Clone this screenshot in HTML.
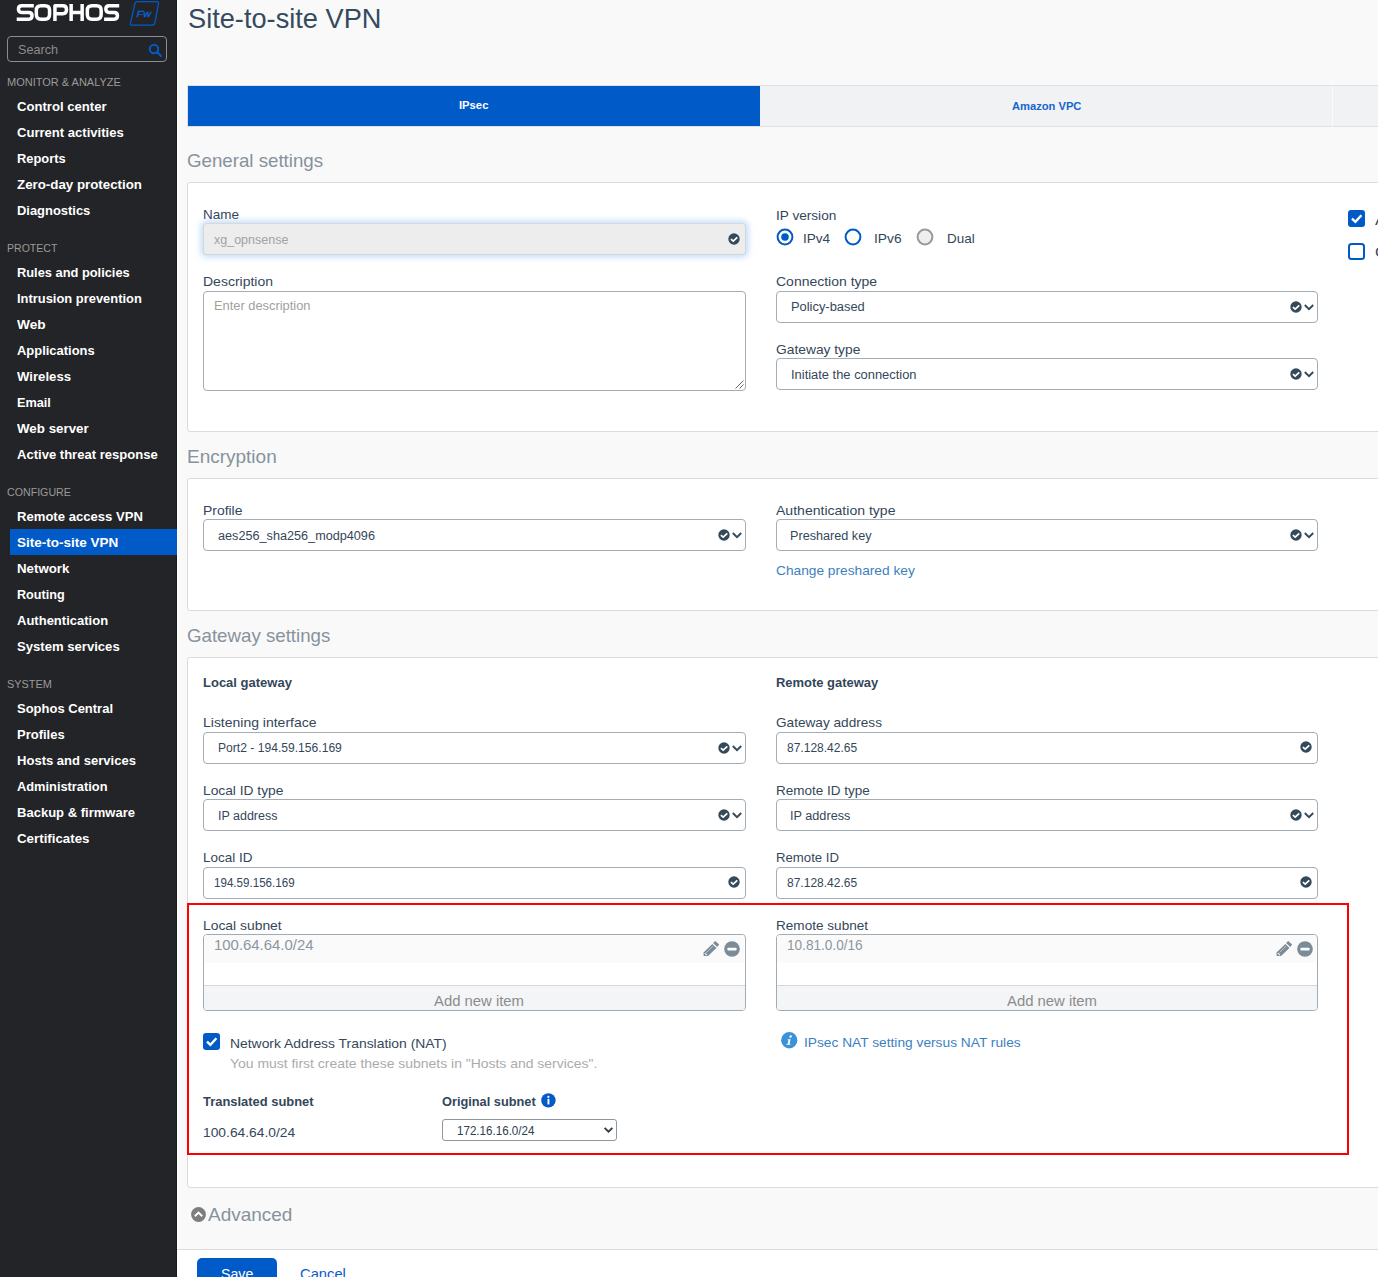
<!DOCTYPE html>
<html>
<head>
<meta charset="utf-8">
<title>Site-to-site VPN</title>
<style>
*{box-sizing:border-box;margin:0;padding:0}
html,body{width:1378px;height:1277px;overflow:hidden;background:#f9f9f9;font-family:"Liberation Sans",sans-serif;color:#34424f}
.abs{position:absolute}
#side{position:absolute;left:0;top:0;width:177px;height:1277px;background:#232427;overflow:hidden}
#main{position:absolute;left:177px;top:0;width:1201px;height:1277px;background:#f9f9f9;overflow:hidden}
.t{position:absolute;white-space:nowrap;transform-origin:0 50%}
.panel{position:absolute;left:10px;width:1300px;background:#fff;border:1px solid #d9dcdf;border-radius:3px}
.bx{position:absolute;border:1px solid #a3adb6;border-radius:4px;background:#fff}
svg{position:absolute;overflow:visible}
.lst{position:absolute;border:1px solid #a1abb4;border-radius:4px;background:#fff;overflow:hidden}
.lst .r1{position:absolute;left:0;top:0;right:1px;height:28px;background:#fafafa}
.lst .r2{position:absolute;left:0;right:0;bottom:0;height:25px;background:#f4f5f7;border-top:1px solid #d7d7db}

</style>
</head>
<body>
<div id="side">
<div class="abs" style="left:176px;top:0;width:1px;height:1277px;background:#18191b"></div>
<svg style="left:0;top:0" width="125" height="26" viewBox="0 0 125 26"><path d="M33.80 5.65 H21.75 Q18.45 5.65 18.45 8.95 V9.10 Q18.45 12.40 21.75 12.40 H28.75 Q32.05 12.40 32.05 15.70 V15.85 Q32.05 19.15 28.75 19.15 H16.70 M40.95 5.65 H44.95 Q49.55 5.65 49.55 10.25 V14.55 Q49.55 19.15 44.95 19.15 H40.95 Q36.35 19.15 36.35 14.55 V10.25 Q36.35 5.65 40.95 5.65 Z M54.95 20.90 V5.65 H62.85 Q66.45 5.65 66.45 9.25 V10.05 Q66.45 13.65 62.85 13.65 H54.95 M71.15 3.90 V20.90 M82.15 3.90 V20.90 M71.15 12.40 H82.15 M91.95 5.65 H96.55 Q101.15 5.65 101.15 10.25 V14.55 Q101.15 19.15 96.55 19.15 H91.95 Q87.35 19.15 87.35 14.55 V10.25 Q87.35 5.65 91.95 5.65 Z M119.20 5.65 H109.15 Q105.85 5.65 105.85 8.95 V9.10 Q105.85 12.40 109.15 12.40 H114.15 Q117.45 12.40 117.45 15.70 V15.85 Q117.45 19.15 114.15 19.15 H104.10" fill="none" stroke="#fff" stroke-width="3.5" stroke-linejoin="round"/></svg>
<svg style="left:129px;top:0" width="32" height="28" viewBox="0 0 32 28"><path d="M8.6 1.6 H28 Q30 1.6 29.5 3.6 L25.9 22.8 Q25.4 25.1 23 25.1 H2.4 Q1 25.1 1.4 23.7 L5.9 3.6 Q6.4 1.6 8.6 1.6 Z" fill="none" stroke="#005bc8" stroke-width="1.3"/><text x="7.6" y="16.9" font-family="Liberation Sans, sans-serif" font-style="italic" font-size="9.8" fill="#0a62d6" stroke="#0a62d6" stroke-width="0.35" textLength="14.4" lengthAdjust="spacingAndGlyphs">Fw</text></svg>
<div class="abs" style="left:7px;top:36px;width:160px;height:26px;border:1px solid #878e95;border-radius:4px;"></div>
<svg style="left:148px;top:43px" width="15" height="15" viewBox="0 0 15 15"><circle cx="6" cy="6" r="4.2" fill="none" stroke="#005bc8" stroke-width="2"/><path d="M9.2 9.2 L13 13" stroke="#005bc8" stroke-width="2.2" stroke-linecap="round"/></svg>
<div class="abs" style="left:10px;top:529px;width:167px;height:26px;background:#005bc8"></div>

<div class="t" style="left:17.91px;top:41.30px;font-size:13px;line-height:17px;color:#8b8b8b;transform:scaleX(0.9703);">Search</div>
<div class="t" style="left:6.96px;top:74.60px;font-size:11.5px;line-height:15px;color:#9c9a97;transform:scaleX(0.9564);">MONITOR &amp; ANALYZE</div>
<div class="t" style="left:16.80px;top:97.70px;font-size:13.4px;line-height:17px;color:#ffffff;font-weight:bold;transform:scaleX(0.9791);">Control center</div>
<div class="t" style="left:16.80px;top:123.70px;font-size:13.4px;line-height:17px;color:#ffffff;font-weight:bold;transform:scaleX(0.9753);">Current activities</div>
<div class="t" style="left:16.80px;top:149.70px;font-size:13.4px;line-height:17px;color:#ffffff;font-weight:bold;transform:scaleX(0.9604);">Reports</div>
<div class="t" style="left:16.80px;top:175.70px;font-size:13.4px;line-height:17px;color:#ffffff;font-weight:bold;transform:scaleX(0.9942);">Zero-day protection</div>
<div class="t" style="left:16.80px;top:201.70px;font-size:13.4px;line-height:17px;color:#ffffff;font-weight:bold;transform:scaleX(0.9657);">Diagnostics</div>
<div class="t" style="left:6.96px;top:240.60px;font-size:11.5px;line-height:15px;color:#9c9a97;transform:scaleX(0.9170);">PROTECT</div>
<div class="t" style="left:16.80px;top:263.70px;font-size:13.4px;line-height:17px;color:#ffffff;font-weight:bold;transform:scaleX(0.9585);">Rules and policies</div>
<div class="t" style="left:16.80px;top:289.70px;font-size:13.4px;line-height:17px;color:#ffffff;font-weight:bold;transform:scaleX(0.9641);">Intrusion prevention</div>
<div class="t" style="left:16.80px;top:315.70px;font-size:13.4px;line-height:17px;color:#ffffff;font-weight:bold;transform:scaleX(1.0204);">Web</div>
<div class="t" style="left:16.80px;top:341.70px;font-size:13.4px;line-height:17px;color:#ffffff;font-weight:bold;transform:scaleX(0.9670);">Applications</div>
<div class="t" style="left:16.80px;top:367.70px;font-size:13.4px;line-height:17px;color:#ffffff;font-weight:bold;transform:scaleX(0.9843);">Wireless</div>
<div class="t" style="left:16.80px;top:393.70px;font-size:13.4px;line-height:17px;color:#ffffff;font-weight:bold;transform:scaleX(0.9488);">Email</div>
<div class="t" style="left:16.80px;top:419.70px;font-size:13.4px;line-height:17px;color:#ffffff;font-weight:bold;transform:scaleX(0.9963);">Web server</div>
<div class="t" style="left:16.80px;top:445.70px;font-size:13.4px;line-height:17px;color:#ffffff;font-weight:bold;transform:scaleX(0.9746);">Active threat response</div>
<div class="t" style="left:6.96px;top:484.60px;font-size:11.5px;line-height:15px;color:#9c9a97;transform:scaleX(0.9259);">CONFIGURE</div>
<div class="t" style="left:16.80px;top:507.70px;font-size:13.4px;line-height:17px;color:#ffffff;font-weight:bold;transform:scaleX(0.9777);">Remote access VPN</div>
<div class="t" style="left:16.80px;top:533.70px;font-size:13.4px;line-height:17px;color:#ffffff;font-weight:bold;transform:scaleX(1.0075);">Site-to-site VPN</div>
<div class="t" style="left:16.80px;top:559.70px;font-size:13.4px;line-height:17px;color:#ffffff;font-weight:bold;transform:scaleX(0.9917);">Network</div>
<div class="t" style="left:16.80px;top:585.70px;font-size:13.4px;line-height:17px;color:#ffffff;font-weight:bold;transform:scaleX(0.9432);">Routing</div>
<div class="t" style="left:16.80px;top:611.70px;font-size:13.4px;line-height:17px;color:#ffffff;font-weight:bold;transform:scaleX(0.9719);">Authentication</div>
<div class="t" style="left:16.80px;top:637.70px;font-size:13.4px;line-height:17px;color:#ffffff;font-weight:bold;transform:scaleX(0.9783);">System services</div>
<div class="t" style="left:6.96px;top:676.60px;font-size:11.5px;line-height:15px;color:#9c9a97;transform:scaleX(0.9449);">SYSTEM</div>
<div class="t" style="left:16.80px;top:699.70px;font-size:13.4px;line-height:17px;color:#ffffff;font-weight:bold;transform:scaleX(0.9702);">Sophos Central</div>
<div class="t" style="left:16.80px;top:725.70px;font-size:13.4px;line-height:17px;color:#ffffff;font-weight:bold;transform:scaleX(0.9711);">Profiles</div>
<div class="t" style="left:16.80px;top:751.70px;font-size:13.4px;line-height:17px;color:#ffffff;font-weight:bold;transform:scaleX(0.9740);">Hosts and services</div>
<div class="t" style="left:16.80px;top:777.70px;font-size:13.4px;line-height:17px;color:#ffffff;font-weight:bold;transform:scaleX(0.9579);">Administration</div>
<div class="t" style="left:16.80px;top:803.70px;font-size:13.4px;line-height:17px;color:#ffffff;font-weight:bold;transform:scaleX(0.9727);">Backup &amp; firmware</div>
<div class="t" style="left:16.80px;top:829.70px;font-size:13.4px;line-height:17px;color:#ffffff;font-weight:bold;transform:scaleX(0.9941);">Certificates</div>
</div>
<div id="main">
<div class="abs" style="left:0;top:0;width:1px;height:1277px;background:#fff"></div>
<!-- tabs -->
<div class="abs" style="left:10px;top:85px;width:1200px;height:42px;background:#f1f2f4;border:1px solid #dfe1e4;"></div>
<div class="abs" style="left:11px;top:86px;width:572px;height:40px;background:#005bc8;"></div>
<div class="abs" style="left:1155px;top:86px;width:1px;height:40px;background:#fafafa;"></div>
<!-- panels -->
<div class="panel" style="top:182px;height:250px"></div>
<div class="panel" style="top:478px;height:133px"></div>
<div class="panel" style="top:657px;height:531px"></div>
<!-- radios -->
<svg style="left:598.5px;top:227.6px" width="18" height="18" viewBox="0 0 18 18"><circle cx="9" cy="9" r="7.4" fill="#fff" stroke="#005bc8" stroke-width="2"/><circle cx="9" cy="9" r="3.8" fill="#005bc8"/></svg>
<svg style="left:666.6px;top:227.6px" width="18" height="18" viewBox="0 0 18 18"><circle cx="9" cy="9" r="7.4" fill="#fcfcfc" stroke="#005bc8" stroke-width="2"/></svg>
<svg style="left:738.6px;top:227.6px" width="18" height="18" viewBox="0 0 18 18"><circle cx="9" cy="9" r="7.4" fill="#eee" stroke="#9a9a9a" stroke-width="2"/></svg>
<!-- right checkboxes -->
<svg style="left:1171px;top:210px" width="17" height="17" viewBox="0 0 17 17"><rect x="0" y="0" width="17" height="17" rx="3" fill="#005bc8"/><path d="M4 8.6 L7.4 11.8 L13.4 5.2" fill="none" stroke="#fff" stroke-width="2.4"/></svg>
<svg style="left:1171px;top:243px" width="17" height="17" viewBox="0 0 17 17"><rect x="1" y="1" width="15" height="15" rx="2.5" fill="#fff" stroke="#005bc8" stroke-width="2"/></svg>
<!-- red box -->
<div class="abs" style="left:10px;top:903px;width:1162px;height:252px;border:2px solid #ff0000"></div>
<!-- NAT checkbox -->
<svg style="left:26px;top:1033px" width="17" height="17" viewBox="0 0 17 17"><rect x="0" y="0" width="17" height="17" rx="3" fill="#005bc8"/><path d="M4 8.6 L7.4 11.8 L13.4 5.2" fill="none" stroke="#fff" stroke-width="2.4"/></svg>
<!-- info icons -->
<svg style="left:364.1px;top:1093.1px" width="14.8" height="14.8" viewBox="0 0 15 15"><circle cx="7.5" cy="7.5" r="7.3" fill="#005bc8"/><circle cx="7.5" cy="4" r="1.1" fill="#fff"/><rect x="6.6" y="6" width="1.9" height="5.6" fill="#fff"/></svg>
<svg style="left:604.1px;top:1031.7px" width="16.5" height="16.5" viewBox="0 0 16 16"><circle cx="8" cy="8" r="7.9" fill="#3a93d8"/><g transform="translate(1.9 0) skewX(-13)"><circle cx="8.4" cy="4.3" r="1.2" fill="#fff"/><path d="M6.3 7 H9 V11.3 H10 V12.4 H6.2 V11.3 H7.2 V8.1 H6.3 Z" fill="#fff"/></g></svg>
<!-- native select -->
<div class="abs" style="left:265px;top:1119px;width:175px;height:22px;border:1px solid #8f969c;border-radius:3px;background:#fff"></div>
<svg style="left:426.6px;top:1127.4px" width="9" height="6" viewBox="0 0 9 6"><path d="M0.6 0.9 L4.5 4.7 L8.4 0.9" fill="none" stroke="#2e3f4d" stroke-width="1.9"/></svg>
<!-- advanced icon -->
<svg style="left:13.9px;top:1207.4px" width="15" height="15" viewBox="0 0 15 15"><circle cx="7.5" cy="7.5" r="7.4" fill="#7d7d7d"/><path d="M3.8 9.3 L7.5 5.6 L11.2 9.3" fill="none" stroke="#fff" stroke-width="2"/></svg>
<!-- bottom bar -->
<div class="abs" style="left:0;top:1249px;width:1201px;height:40px;background:#fff;border-top:1px solid #dcdcdc"></div>
<div class="abs" style="left:20px;top:1258px;width:80px;height:40px;background:#005bc8;border-radius:5px"></div>

<div class="bx" style="left:26.0px;top:223.4px;width:543.0px;height:31.4px;background:#ededed;border-color:#d4d6d8;border-top-color:#d9d9d9;box-shadow:0 0 6px 1.5px rgba(150,195,245,.6);"></div><svg style="left:550.6px;top:233.4px" width="12" height="12" viewBox="0 0 12 12"><circle cx="6" cy="6" r="5.7" fill="#34495a"/><path d="M2.9 6.1 L5.2 8.1 L9.3 4.4" fill="none" stroke="#fff" stroke-width="1.75"/></svg>
<div class="bx" style="left:26.0px;top:291.0px;width:543.0px;height:100.0px;"></div>
<svg style="left:558.0px;top:380.0px" width="9" height="9" viewBox="0 0 9 9"><path d="M0.5 8.5 L8.5 0.5 M4.5 8.5 L8.5 4.5" stroke="#666" stroke-width="1" fill="none"/></svg>
<div class="bx" style="left:599.0px;top:291.0px;width:542.0px;height:32.0px;"></div><svg style="left:1113.3px;top:300.8px" width="12" height="12" viewBox="0 0 12 12"><circle cx="6" cy="6" r="5.7" fill="#34495a"/><path d="M2.9 6.1 L5.2 8.1 L9.3 4.4" fill="none" stroke="#fff" stroke-width="1.75"/></svg><svg style="left:1126.8px;top:303.8px" width="10" height="7" viewBox="0 0 10 7"><path d="M0.8 1 L5 5.2 L9.2 1" fill="none" stroke="#34495a" stroke-width="1.9"/></svg>
<div class="bx" style="left:599.0px;top:358.0px;width:542.0px;height:32.0px;"></div><svg style="left:1113.3px;top:368.3px" width="12" height="12" viewBox="0 0 12 12"><circle cx="6" cy="6" r="5.7" fill="#34495a"/><path d="M2.9 6.1 L5.2 8.1 L9.3 4.4" fill="none" stroke="#fff" stroke-width="1.75"/></svg><svg style="left:1126.8px;top:371.3px" width="10" height="7" viewBox="0 0 10 7"><path d="M0.8 1 L5 5.2 L9.2 1" fill="none" stroke="#34495a" stroke-width="1.9"/></svg>
<div class="bx" style="left:26.0px;top:519.0px;width:543.0px;height:32.0px;"></div><svg style="left:540.9px;top:528.8px" width="12" height="12" viewBox="0 0 12 12"><circle cx="6" cy="6" r="5.7" fill="#34495a"/><path d="M2.9 6.1 L5.2 8.1 L9.3 4.4" fill="none" stroke="#fff" stroke-width="1.75"/></svg><svg style="left:554.8px;top:531.8px" width="10" height="7" viewBox="0 0 10 7"><path d="M0.8 1 L5 5.2 L9.2 1" fill="none" stroke="#34495a" stroke-width="1.9"/></svg>
<div class="bx" style="left:599.0px;top:519.0px;width:542.0px;height:32.0px;"></div><svg style="left:1113.3px;top:528.8px" width="12" height="12" viewBox="0 0 12 12"><circle cx="6" cy="6" r="5.7" fill="#34495a"/><path d="M2.9 6.1 L5.2 8.1 L9.3 4.4" fill="none" stroke="#fff" stroke-width="1.75"/></svg><svg style="left:1126.8px;top:531.8px" width="10" height="7" viewBox="0 0 10 7"><path d="M0.8 1 L5 5.2 L9.2 1" fill="none" stroke="#34495a" stroke-width="1.9"/></svg>
<div class="bx" style="left:26.0px;top:732.0px;width:543.0px;height:32.0px;"></div><svg style="left:540.9px;top:741.8px" width="12" height="12" viewBox="0 0 12 12"><circle cx="6" cy="6" r="5.7" fill="#34495a"/><path d="M2.9 6.1 L5.2 8.1 L9.3 4.4" fill="none" stroke="#fff" stroke-width="1.75"/></svg><svg style="left:554.8px;top:744.8px" width="10" height="7" viewBox="0 0 10 7"><path d="M0.8 1 L5 5.2 L9.2 1" fill="none" stroke="#34495a" stroke-width="1.9"/></svg>
<div class="bx" style="left:599.0px;top:732.0px;width:542.0px;height:32.0px;"></div><svg style="left:1122.6px;top:741.4px" width="12" height="12" viewBox="0 0 12 12"><circle cx="6" cy="6" r="5.7" fill="#34495a"/><path d="M2.9 6.1 L5.2 8.1 L9.3 4.4" fill="none" stroke="#fff" stroke-width="1.75"/></svg>
<div class="bx" style="left:26.0px;top:799.0px;width:543.0px;height:32.0px;"></div><svg style="left:540.9px;top:809.3px" width="12" height="12" viewBox="0 0 12 12"><circle cx="6" cy="6" r="5.7" fill="#34495a"/><path d="M2.9 6.1 L5.2 8.1 L9.3 4.4" fill="none" stroke="#fff" stroke-width="1.75"/></svg><svg style="left:554.8px;top:812.3px" width="10" height="7" viewBox="0 0 10 7"><path d="M0.8 1 L5 5.2 L9.2 1" fill="none" stroke="#34495a" stroke-width="1.9"/></svg>
<div class="bx" style="left:599.0px;top:799.0px;width:542.0px;height:32.0px;"></div><svg style="left:1113.3px;top:809.3px" width="12" height="12" viewBox="0 0 12 12"><circle cx="6" cy="6" r="5.7" fill="#34495a"/><path d="M2.9 6.1 L5.2 8.1 L9.3 4.4" fill="none" stroke="#fff" stroke-width="1.75"/></svg><svg style="left:1126.8px;top:812.3px" width="10" height="7" viewBox="0 0 10 7"><path d="M0.8 1 L5 5.2 L9.2 1" fill="none" stroke="#34495a" stroke-width="1.9"/></svg>
<div class="bx" style="left:26.0px;top:867.0px;width:543.0px;height:32.0px;"></div><svg style="left:550.6px;top:876.4px" width="12" height="12" viewBox="0 0 12 12"><circle cx="6" cy="6" r="5.7" fill="#34495a"/><path d="M2.9 6.1 L5.2 8.1 L9.3 4.4" fill="none" stroke="#fff" stroke-width="1.75"/></svg>
<div class="bx" style="left:599.0px;top:867.0px;width:542.0px;height:32.0px;"></div><svg style="left:1122.6px;top:876.4px" width="12" height="12" viewBox="0 0 12 12"><circle cx="6" cy="6" r="5.7" fill="#34495a"/><path d="M2.9 6.1 L5.2 8.1 L9.3 4.4" fill="none" stroke="#fff" stroke-width="1.75"/></svg>
<div class="lst" style="left:26px;top:934px;width:543px;height:77px"><div class="r1"></div><div class="r2"></div></div><svg style="left:526.0px;top:940.0px" width="17" height="17" viewBox="0 0 17 17"><path d="M12.2 1 L16.2 4.6 L14.2 6.9 L10.1 3 Z M9.4 3.9 L13.5 8 L5 16.1 L0.7 16.1 L0.5 12.4 Z" fill="#7b8b97"/><path d="M3.4 12.6 L10.2 5.9" stroke="#fafafa" stroke-width="0.5" fill="none"/><path d="M1.8 13.2 L3.9 15.2" stroke="#fafafa" stroke-width="1.1" fill="none"/></svg><svg style="left:547.0px;top:940.5px" width="16" height="16" viewBox="0 0 16 16"><circle cx="8" cy="8" r="7.8" fill="#7b8b97"/><rect x="3.4" y="6.7" width="9.2" height="2.8" rx="0.8" fill="#fff"/></svg>
<div class="lst" style="left:599px;top:934px;width:542px;height:77px"><div class="r1"></div><div class="r2"></div></div><svg style="left:1098.7px;top:940.0px" width="17" height="17" viewBox="0 0 17 17"><path d="M12.2 1 L16.2 4.6 L14.2 6.9 L10.1 3 Z M9.4 3.9 L13.5 8 L5 16.1 L0.7 16.1 L0.5 12.4 Z" fill="#7b8b97"/><path d="M3.4 12.6 L10.2 5.9" stroke="#fafafa" stroke-width="0.5" fill="none"/><path d="M1.8 13.2 L3.9 15.2" stroke="#fafafa" stroke-width="1.1" fill="none"/></svg><svg style="left:1119.7px;top:940.5px" width="16" height="16" viewBox="0 0 16 16"><circle cx="8" cy="8" r="7.8" fill="#7b8b97"/><rect x="3.4" y="6.7" width="9.2" height="2.8" rx="0.8" fill="#fff"/></svg>
<div class="t" style="left:10.67px;top:1.40px;font-size:27.6px;line-height:36px;color:#364a5e;transform:scaleX(0.9855);">Site-to-site VPN</div>
<div class="t" style="left:282.25px;top:97.70px;font-size:11.5px;line-height:15px;color:#ffffff;font-weight:bold;transform:scaleX(0.9776);">IPsec</div>
<div class="t" style="left:834.95px;top:99.10px;font-size:11.5px;line-height:15px;color:#1565d0;font-weight:bold;transform:scaleX(0.9694);">Amazon VPC</div>
<div class="t" style="left:10.04px;top:148.50px;font-size:18.5px;line-height:24px;color:#87929c;transform:scaleX(1.0103);">General settings</div>
<div class="t" style="left:10.04px;top:444.50px;font-size:18.5px;line-height:24px;color:#87929c;transform:scaleX(1.0264);">Encryption</div>
<div class="t" style="left:10.04px;top:623.50px;font-size:18.5px;line-height:24px;color:#87929c;transform:scaleX(1.0099);">Gateway settings</div>
<div class="t" style="left:30.64px;top:1202.50px;font-size:18.5px;line-height:24px;color:#87929c;transform:scaleX(1.0257);">Advanced</div>
<div class="t" style="left:26.22px;top:206.00px;font-size:12.8px;line-height:17px;color:#34475a;transform:scaleX(1.0535);">Name</div>
<div class="t" style="left:37.02px;top:230.60px;font-size:12.8px;line-height:17px;color:#a2a2a2;transform:scaleX(0.9767);">xg_opnsense</div>
<div class="t" style="left:26.22px;top:272.80px;font-size:12.8px;line-height:17px;color:#34475a;transform:scaleX(1.0945);">Description</div>
<div class="t" style="left:37.02px;top:296.90px;font-size:12.8px;line-height:17px;color:#a0a0a0;transform:scaleX(1.0045);">Enter description</div>
<div class="t" style="left:598.92px;top:207.00px;font-size:12.8px;line-height:17px;color:#34475a;transform:scaleX(1.0635);">IP version</div>
<div class="t" style="left:625.72px;top:229.70px;font-size:12.8px;line-height:17px;color:#34475a;transform:scaleX(1.0609);">IPv4</div>
<div class="t" style="left:697.42px;top:229.70px;font-size:12.8px;line-height:17px;color:#34475a;transform:scaleX(1.0765);">IPv6</div>
<div class="t" style="left:769.52px;top:229.70px;font-size:12.8px;line-height:17px;color:#34475a;transform:scaleX(1.0509);">Dual</div>
<div class="t" style="left:598.92px;top:272.80px;font-size:12.8px;line-height:17px;color:#34475a;transform:scaleX(1.0928);">Connection type</div>
<div class="t" style="left:613.73px;top:298.70px;font-size:12.5px;line-height:16px;color:#34475a;transform:scaleX(1.0303);">Policy-based</div>
<div class="t" style="left:598.92px;top:341.40px;font-size:12.8px;line-height:17px;color:#34475a;transform:scaleX(1.0782);">Gateway type</div>
<div class="t" style="left:613.73px;top:367.30px;font-size:12.5px;line-height:16px;color:#34475a;transform:scaleX(1.0323);">Initiate the connection</div>
<div class="t" style="left:1198.06px;top:210.70px;font-size:14.8px;line-height:19px;color:#34475a;transform:scaleX(1.1127);">A</div>
<div class="t" style="left:1198.46px;top:242.80px;font-size:14.8px;line-height:19px;color:#34475a;transform:scaleX(1.0655);">C</div>
<div class="t" style="left:26.22px;top:502.30px;font-size:12.8px;line-height:17px;color:#34475a;transform:scaleX(1.0878);">Profile</div>
<div class="t" style="left:41.03px;top:528.30px;font-size:12.5px;line-height:16px;color:#34475a;transform:scaleX(1.0126);">aes256_sha256_modp4096</div>
<div class="t" style="left:598.92px;top:502.30px;font-size:12.8px;line-height:17px;color:#34475a;transform:scaleX(1.0975);">Authentication type</div>
<div class="t" style="left:612.83px;top:528.30px;font-size:12.5px;line-height:16px;color:#34475a;transform:scaleX(1.0117);">Preshared key</div>
<div class="t" style="left:598.92px;top:561.60px;font-size:12.8px;line-height:17px;color:#3d7fbf;transform:scaleX(1.0717);">Change preshared key</div>
<div class="t" style="left:26.02px;top:674.30px;font-size:12.8px;line-height:17px;color:#33465a;font-weight:bold;transform:scaleX(1.0158);">Local gateway</div>
<div class="t" style="left:598.72px;top:674.30px;font-size:12.8px;line-height:17px;color:#33465a;font-weight:bold;transform:scaleX(1.0116);">Remote gateway</div>
<div class="t" style="left:26.22px;top:714.00px;font-size:12.8px;line-height:17px;color:#34475a;transform:scaleX(1.0924);">Listening interface</div>
<div class="t" style="left:41.03px;top:740.00px;font-size:12.5px;line-height:16px;color:#34475a;transform:scaleX(0.9685);">Port2 - 194.59.156.169</div>
<div class="t" style="left:598.92px;top:714.00px;font-size:12.8px;line-height:17px;color:#34475a;transform:scaleX(1.0640);">Gateway address</div>
<div class="t" style="left:610.12px;top:740.00px;font-size:12.5px;line-height:16px;color:#34475a;transform:scaleX(0.9610);">87.128.42.65</div>
<div class="t" style="left:26.22px;top:781.70px;font-size:12.8px;line-height:17px;color:#34475a;transform:scaleX(1.0758);">Local ID type</div>
<div class="t" style="left:41.03px;top:807.70px;font-size:12.5px;line-height:16px;color:#34475a;transform:scaleX(0.9986);">IP address</div>
<div class="t" style="left:598.92px;top:781.70px;font-size:12.8px;line-height:17px;color:#34475a;transform:scaleX(1.0558);">Remote ID type</div>
<div class="t" style="left:612.83px;top:807.70px;font-size:12.5px;line-height:16px;color:#34475a;transform:scaleX(1.0138);">IP address</div>
<div class="t" style="left:26.22px;top:849.00px;font-size:12.8px;line-height:17px;color:#34475a;transform:scaleX(1.0536);">Local ID</div>
<div class="t" style="left:37.22px;top:875.20px;font-size:12.5px;line-height:16px;color:#34475a;transform:scaleX(0.9282);">194.59.156.169</div>
<div class="t" style="left:598.92px;top:849.00px;font-size:12.8px;line-height:17px;color:#34475a;transform:scaleX(1.0294);">Remote ID</div>
<div class="t" style="left:610.12px;top:875.20px;font-size:12.5px;line-height:16px;color:#34475a;transform:scaleX(0.9610);">87.128.42.65</div>
<div class="t" style="left:26.22px;top:916.60px;font-size:12.8px;line-height:17px;color:#34475a;transform:scaleX(1.0839);">Local subnet</div>
<div class="t" style="left:598.92px;top:916.60px;font-size:12.8px;line-height:17px;color:#34475a;transform:scaleX(1.0607);">Remote subnet</div>
<div class="t" style="left:37.15px;top:934.80px;font-size:15px;line-height:20px;color:#8d969e;transform:scaleX(0.9941);">100.64.64.0/24</div>
<div class="t" style="left:610.15px;top:934.80px;font-size:15px;line-height:20px;color:#8d969e;transform:scaleX(0.9062);">10.81.0.0/16</div>
<div class="t" style="left:257.46px;top:991.50px;font-size:14.5px;line-height:19px;color:#8c8c8c;transform:scaleX(1.0240);">Add new item</div>
<div class="t" style="left:829.87px;top:991.50px;font-size:14.5px;line-height:19px;color:#8c8c8c;transform:scaleX(1.0240);">Add new item</div>
<div class="t" style="left:53.22px;top:1034.80px;font-size:12.8px;line-height:17px;color:#34475a;transform:scaleX(1.0855);">Network Address Translation (NAT)</div>
<div class="t" style="left:53.22px;top:1054.80px;font-size:12.8px;line-height:17px;color:#ababab;transform:scaleX(1.0891);">You must first create these subnets in &quot;Hosts and services&quot;.</div>
<div class="t" style="left:626.82px;top:1033.80px;font-size:12.8px;line-height:17px;color:#3d7fbf;transform:scaleX(1.0739);">IPsec NAT setting versus NAT rules</div>
<div class="t" style="left:26.02px;top:1092.80px;font-size:12.8px;line-height:17px;color:#33465a;font-weight:bold;transform:scaleX(1.0096);">Translated subnet</div>
<div class="t" style="left:264.62px;top:1093.00px;font-size:12.8px;line-height:17px;color:#33465a;font-weight:bold;transform:scaleX(0.9980);">Original subnet</div>
<div class="t" style="left:26.22px;top:1124.00px;font-size:12.8px;line-height:17px;color:#34475a;transform:scaleX(1.0792);">100.64.64.0/24</div>
<div class="t" style="left:279.62px;top:1123.00px;font-size:12.5px;line-height:16px;color:#30404f;transform:scaleX(0.9284);">172.16.16.0/24</div>
<div class="t" style="left:44.06px;top:1264.80px;font-size:14.5px;line-height:19px;color:#ffffff;transform:scaleX(0.9791);">Save</div>
<div class="t" style="left:123.17px;top:1264.80px;font-size:14.5px;line-height:19px;color:#0a5cc7;transform:scaleX(1.0162);">Cancel</div>
</div>
</body>
</html>
